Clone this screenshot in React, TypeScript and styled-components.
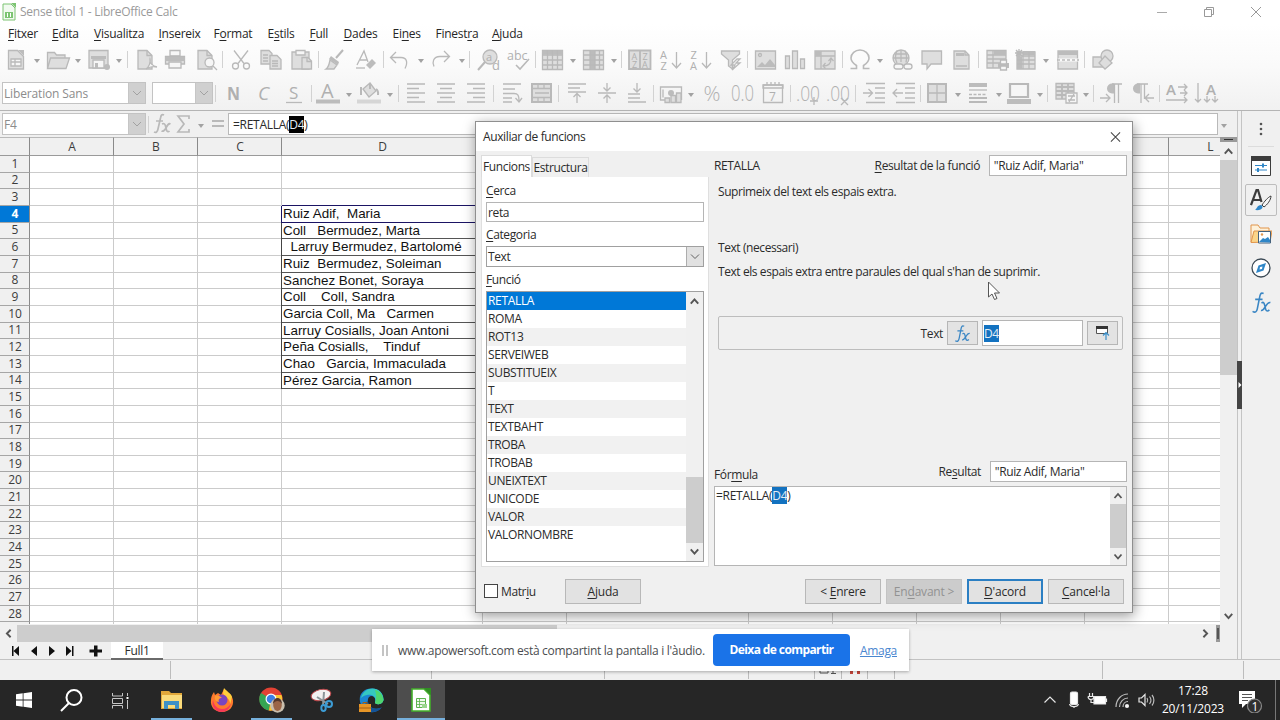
import React from 'react';
import styled, { createGlobalStyle, css } from 'styled-components';

const GlobalStyle = createGlobalStyle`
    * { box-sizing: border-box; }
    body {
        margin: 0;
        overflow: hidden;
        font-family: 'Open Sans', 'Noto Sans', sans-serif;
        font-size: 12px;
        color: #2b2b2b;
    }
    u { text-underline-offset: 2px; text-decoration-thickness: 1px; }
`;

const Screen = styled.div`
    position: relative;
    width: 1280px;
    height: 720px;
    display: flex;
    flex-direction: column;
    overflow: hidden;
    background: #f0f0f0;
`;

/* window header */
const Header = styled.div`
    height: 111px;
    flex: none;
    background: linear-gradient(#ffffff 22%, #fafafa 60%, #f1f1f1);
    border-bottom: 1px solid #b4b4b4;
`;
const TitleBar = styled.div`
    height: 23px;
    display: flex;
    align-items: center;
    padding: 0 17px 0 2px;
    color: #9a9a9a;

    span {
        flex: 1;
        margin-left: 4px;
        letter-spacing: -0.25px;
    }
    svg + svg { margin-left: 33px; }
`;
const MenuBar = styled.div`
    height: 20px;
    display: flex;
    align-items: center;
    padding-left: 8px;
`;
const MenuItem = styled.span<{ $w: number }>`
    width: ${p => p.$w}px;
    white-space: nowrap;
    letter-spacing: -0.25px;
    color: #262626;
`;
const ToolRow = styled.div<{ $h: number; $pad: number }>`
    height: ${p => p.$h}px;
    display: flex;
    align-items: center;
    padding-left: ${p => p.$pad}px;
`;
const Tool = styled.svg<{ $gap: number }>`
    width: 24px;
    height: 24px;
    flex: none;
    margin-left: ${p => p.$gap}px;
    overflow: visible;
    fill: none;
    stroke: #b9b9b9;
    stroke-width: 1.3;

    .f { fill: #dedede; }
    .d { fill: #bcbcbc; stroke: none; }
    .w { fill: #f6f6f6; }
    text {
        fill: #b0b0b0;
        stroke: none;
        font-family: 'Open Sans', sans-serif;
    }
`;
const Caret = styled.i<{ $gap: number }>`
    width: 0;
    height: 0;
    flex: none;
    margin: 3px 1px 0 ${p => p.$gap + 1}px;
    border: 3px solid transparent;
    border-top: 4px solid #a2a2a2;
    border-bottom: 0;
`;
const Divider = styled.i<{ $gap: number }>`
    width: 1px;
    height: 17px;
    flex: none;
    margin-left: ${p => p.$gap}px;
    background: #d2d2d2;
`;
const Combo = styled.div<{ $w: number; $gap?: number; $dark?: boolean; $h?: number }>`
    width: ${p => p.$w}px;
    height: ${p => p.$h || 22}px;
    flex: none;
    margin-left: ${p => p.$gap || 0}px;
    display: flex;
    align-items: center;
    justify-content: space-between;
    padding-left: 1px;
    border: 1px solid ${p => (p.$dark ? '#a0a0a0' : '#c3c3c3')};
    background: #fff;
    color: ${p => (p.$dark ? '#2b2b2b' : '#8c8c8c')};
    letter-spacing: ${p => (p.$dark ? '-0.4px' : '-0.15px')};

    svg {
        width: 17px;
        height: 100%;
        padding: 0 3px;
        background: ${p => (p.$dark ? '#e1e1e1' : '#d0d0d0')};
        border-left: 1px solid ${p => (p.$dark ? '#adadad' : '#c6c6c6')};
        stroke: ${p => (p.$dark ? '#606060' : '#a2a2a2')};
        fill: none;
    }
`;

/* body */
const Body = styled.div`
    height: 549px;
    flex: none;
    display: flex;
    border-bottom: 1px solid #c2c2c2;
`;
const Main = styled.div`
    width: 1237px;
    display: flex;
    flex-direction: column;
`;
const FormulaBar = styled.div`
    height: 26px;
    flex: none;
    display: flex;
    align-items: center;
    padding-left: 2px;
`;
const FormulaInput = styled.div`
    width: 990px;
    height: 22px;
    margin-left: -2px;
    padding: 0 4px;
    display: flex;
    align-items: center;
    background: #fff;
    border: 1px solid #b9b9b9;
    letter-spacing: -0.28px;
`;
const Mark = styled.span<{ $c: string }>`
    background: ${p => p.$c};
    color: #e4edf5;
    line-height: 17px;
`;
const SheetArea = styled.div`
    height: 488px;
    flex: none;
    display: flex;
`;
const Sheet = styled.div`
    width: 1220px;
    height: 487px;
    flex: none;
    overflow: hidden;
    background: #fff;
`;
const widths = [84, 84, 84, 201, 84, 181.5, 84, 84, 84, 84, 84, 84];
const columns = ['A', 'B', 'C', 'D', 'E', 'F', 'G', 'H', 'I', 'J', 'K', 'L'];
const Row = styled.div<{ $head?: boolean }>`
    width: 1253px;
    height: ${p => (p.$head ? '19px' : '16.67px')};
    display: grid;
    grid-template-columns: 30px ${widths.map(w => w + 'px').join(' ')};
`;
const HeadCell = styled.div<{ $active?: boolean; $top?: boolean }>`
    display: flex;
    align-items: center;
    justify-content: center;
    padding-left: 1px;
    background: ${p => (p.$active ? '#0078d7' : '#f0f0f0')};
    color: ${p => (p.$active ? '#fff' : '#3c3c3c')};
    font-weight: ${p => (p.$active ? 700 : 400)};
    line-height: 14px;
    border-right: 1px solid #8a8a8a;
    border-bottom: 1px solid ${p => (p.$top ? '#9a9a9a' : '#a6a6a6')};
    ${p => p.$top && css`border-top: 1px solid #b9b9b9;`}
`;
const Cell = styled.div<{ $boxed?: boolean; $active?: boolean }>`
    position: relative;
    padding-left: 1px;
    border-right: 1px solid #cbcbcb;
    border-bottom: 1px solid #cbcbcb;
    font: 13.4px/15.5px 'Liberation Sans', Arial, sans-serif;
    color: #111;
    white-space: pre;
    ${p => p.$boxed && css`
        border-bottom-color: #555;
        box-shadow: -1px 0 0 #444;
    `}
    ${p => p.$active && css`
        border-bottom-color: #1b1464;
        box-shadow: -1px 0 0 #1b1464, 0 -1px 0 #1b1464;
    `}
`;

/* scroll bars */
const VScroll = styled.div<{ $w?: number }>`
    width: ${p => p.$w || 17}px;
    flex: none;
    display: flex;
    flex-direction: column;
    background: #f0f0f0;
`;
const ArrowBox = styled.svg<{ $h?: number; $w?: number }>`
    width: ${p => p.$w || 16}px;
    height: ${p => p.$h || 17}px;
    flex: none;
    fill: none;
    stroke: #555;
    stroke-width: 1.8;
`;
const Thumb = styled.div<{ $h: number; $top?: number }>`
    height: ${p => p.$h}px;
    margin-top: ${p => p.$top || 0}px;
    background: #cdcdcd;
`;
const Spacer = styled.div<{ $max?: number }>`
    flex: 1;
    max-width: ${p => (p.$max ? p.$max + 'px' : 'none')};
`;
const SplitGrip = styled.div`
    height: 5px;
    background: #999;
    border: solid #999;
    border-width: 2px 4px 1px;

    &::after {
        content: '';
        display: block;
        height: 1px;
        background: #333;
    }
`;
const HScroll = styled.div`
    height: 17px;
    flex: none;
    display: flex;
    width: 1220px;

    .thumb { width: 540px; height: 17px; background: #cdcdcd; }
    .grip { width: 4px; background: #555; border: 1px solid #999; border-width: 3px 1px; }
`;
const Tabs = styled.div`
    height: 18px;
    flex: none;
    display: flex;
    align-items: center;
    padding-left: 11px;

    > svg { width: 93px; height: 18px; margin-right: 7px; }
`;
const SheetTab = styled.div`
    width: 52px;
    height: 18px;
    line-height: 18px;
    text-align: center;
    background: #fff;
    border-bottom: 2px solid #6a6a6a;
    letter-spacing: -0.3px;
`;
const SplitBar = styled.div`
    width: 5px;
    flex: none;
    padding-top: 250px;
    border: solid #c4c4c4;
    border-width: 0 1px;

    svg { display: block; width: 5px; height: 48px; margin-left: -1px; }
`;
const SideBar = styled.div`
    width: 38px;
    padding-top: 11px;
    display: flex;
    flex-direction: column;
    align-items: center;

    hr { width: 26px; border: 0; border-top: 1px solid #dcdcdc; margin: 10px 0 2px; }
`;
const SideButton = styled.div<{ $on?: boolean }>`
    width: 32px;
    height: 32px;
    margin: 1px 0;
    display: flex;
    align-items: center;
    justify-content: center;
    border: 1px solid ${p => (p.$on ? '#bdbdbd' : 'transparent')};
    border-radius: 2px;
`;
const StatusBar = styled.div`
    height: 20px;
    flex: none;
    display: flex;
    padding: 1px 0;
`;
const StatusCell = styled.div<{ $w: number }>`
    width: ${p => p.$w}px;
    border-right: 1px solid #bcbcbc;
    text-align: center;
`;

/* function wizard */
const Dialog = styled.div`
    position: absolute;
    left: 475px;
    top: 121px;
    width: 658px;
    height: 492px;
    display: flex;
    flex-direction: column;
    background: #f0f0f0;
    border: 1px solid #8f8f8f;
    box-shadow: 1px 3px 12px rgba(0, 0, 0, 0.4);
    letter-spacing: -0.38px;
`;
const DialogTitle = styled.div`
    height: 29px;
    flex: none;
    display: flex;
    align-items: center;
    justify-content: space-between;
    padding: 0 11px 0 7px;
    background: #fff;
`;
const DialogBody = styled.div`
    height: 416px;
    flex: none;
    display: flex;
    padding: 4px 5px 0;
`;
const LeftPane = styled.div`
    width: 228px;
    height: 412px;
    display: flex;
    flex-direction: column;
`;
const DialogTabs = styled.div`
    display: flex;
    align-items: flex-end;
    height: 22px;
    flex: none;
`;
const DialogTab = styled.div<{ $on?: boolean }>`
    width: ${p => (p.$on ? 51 : 57)}px;
    height: ${p => (p.$on ? 22 : 20)}px;
    line-height: ${p => (p.$on ? 21 : 20)}px;
    text-align: center;
    white-space: nowrap;
    background: ${p => (p.$on ? '#fff' : '#f0f0f0')};
    border: 1px solid #dcdcdc;
    border-bottom: 0;
`;
const Pane = styled.div`
    height: 390px;
    padding: 0 4px 5px 4px;
    background: #fff;
    border: 1px solid #dfdfdf;
    border-top: 0;
`;
const FieldLabel = styled.div<{ $h: number }>`
    height: ${p => p.$h}px;
    line-height: ${p => p.$h + 2}px;
`;
const Field = styled.div<{ $w: number; $h?: number }>`
    width: ${p => p.$w}px;
    height: ${p => p.$h || 21}px;
    flex: none;
    display: flex;
    align-items: center;
    padding-left: 1px;
    background: #fff;
    border: 1px solid #b5b5b5;
`;
const List = styled.div`
    height: 271px;
    display: flex;
    border: 1px solid #a0a0a0;
    background: #fff;

    > div:first-child { width: 199px; }
`;
const ListItem = styled.div<{ $on?: boolean }>`
    height: 18px;
    line-height: 18px;
    padding-left: 1px;
    letter-spacing: -0.33px;
    background: #fff;
    &:nth-child(odd) { background: #f1f1f1; }
    ${p => p.$on && css`
        color: #fff;
        &:nth-child(odd) { background: #0078d7; }
    `}
`;
const RightPane = styled.div`
    width: 413px;
    margin-left: 5px;
    display: flex;
    flex-direction: column;
`;
const ResultRow = styled.div<{ $top?: number }>`
    height: 21px;
    margin-top: ${p => p.$top || 0}px;
    flex: none;
    display: flex;
    align-items: center;
    justify-content: space-between;

    > div { display: flex; align-items: center; gap: 9px; }
    > .low { padding-top: 5px; }
`;
const Description = styled.div<{ $h: number; $top?: number }>`
    height: ${p => p.$h}px;
    flex: none;
    padding: ${p => p.$top || 0}px 0 0 4px;
    line-height: 16px;
    letter-spacing: -0.42px;
`;
const ArgumentBox = styled.div`
    width: 405px;
    height: 34px;
    flex: none;
    margin-left: 4px;
    padding-right: 4px;
    display: flex;
    align-items: center;
    justify-content: flex-end;
    gap: 4px;
    border: 1px solid #bdbdbd;
    border-radius: 2px;
`;
const IconButton = styled.div`
    width: 31px;
    height: 24px;
    display: flex;
    align-items: center;
    justify-content: center;
    background: #e3e3e3;
    border: 1px solid #b6b6b6;
`;
const FormulaText = styled.div`
    height: 80px;
    margin-top: 4px;
    display: flex;
    justify-content: space-between;
    background: #fff;
    border: 1px solid #b5b5b5;

    > span { padding: 0 1px; line-height: 17px; letter-spacing: -0.28px; }
`;
const DialogFooter = styled.div`
    flex: 1;
    display: flex;
    align-items: center;
    padding: 3px 8px 0 8px;
    gap: 5px;

    .check { width: 14px; height: 14px; border: 1px solid #444; background: #fff; }
    .label { width: 59px; margin-left: -2px; }
`;
const DialogButton = styled.div<{ $primary?: boolean; $off?: boolean }>`
    width: 76px;
    height: 25px;
    line-height: 23px;
    text-align: center;
    letter-spacing: -0.2px;
    background: ${p => (p.$off ? '#cccccc' : '#e2e2e2')};
    color: ${p => (p.$off ? '#929292' : '#2b2b2b')};
    border: 1px solid ${p => (p.$off ? '#c3c3c3' : '#b8b8b8')};
    ${p => p.$primary && css`
        border: 2px solid #2b7fc3;
        line-height: 21px;
    `}
`;

/* screen sharing notice */
const ShareBar = styled.div`
    position: absolute;
    left: 372px;
    top: 629px;
    width: 537px;
    height: 42px;
    display: flex;
    align-items: center;
    padding: 0 12px 0 10px;
    background: #fff;
    box-shadow: 0 1px 3px rgba(0, 0, 0, 0.3);
    color: #4a4d50;

    .handle { width: 6px; height: 11px; border: solid #c4c4c4; border-width: 0 2px; }
    .message { width: 325px; flex: none; padding-left: 10px; white-space: nowrap; letter-spacing: -0.3px; }
    a { margin-left: 10px; color: #4a86cf; text-decoration: underline; letter-spacing: -0.3px; }
`;
const StopButton = styled.div`
    width: 137px;
    height: 32px;
    flex: none;
    line-height: 32px;
    text-align: center;
    border-radius: 4px;
    background: #1a73e8;
    color: #fff;
    font-weight: 700;
    letter-spacing: -0.6px;
`;
const Pointer = styled.svg`
    position: absolute;
    left: 987px;
    top: 281px;
    width: 14px;
    height: 20px;
`;

/* windows task bar */
const TaskBar = styled.div`
    height: 40px;
    flex: none;
    display: flex;
    background: #262626;
    color: #fff;
`;
const TaskItem = styled.div<{ $w?: number; $line?: boolean; $on?: boolean }>`
    width: ${p => p.$w || 50}px;
    height: 40px;
    display: flex;
    align-items: center;
    justify-content: center;
    background: ${p => (p.$on ? '#4d4d4d' : 'none')};

    ${p => p.$line && css`
        background-image: linear-gradient(#76b0dc, #76b0dc);
        background-repeat: no-repeat;
        background-position: bottom;
        background-size: ${p.$on ? '100%' : '41px'} 2px;
    `}
`;
const Tray = styled.div`
    margin-left: auto;
    display: flex;
    align-items: center;

    > svg { width: 24px; height: 24px; fill: none; stroke: #e6e6e6; stroke-width: 1.2; }
    > svg:last-of-type { width: 26px; height: 26px; margin-left: 9px; }
`;
const Clock = styled.div`
    width: 70px;
    text-align: center;
    line-height: 18px;
    letter-spacing: -0.15px;
    white-space: nowrap;
`;
const ShowDesktop = styled.div`
    width: 5px;
    height: 40px;
    margin-left: 12px;
    border-left: 1px solid #777;
`;

const lines = (ys: number[], x1: number, x2: number) => ys.map(y => `M${x1} ${y}H${x2}`).join('');

const icons: Record<string, React.ReactNode> = {
    newDoc: <><path className="f" d="M4.500 2.500h9l6 6v12.500h-15z" /><path className="d" d="M14 2h6v6z" /><path className="w" d="M7 11h10v7H7zM7 14h10M11 11v7" /></>,
    open: <path className="f" d="M1.500 20V4.500h7l2 2.500h8.500v3M1.500 20.500l3-10.500h19l-3.500 10.500z" />,
    save: <><path className="f" d="M2 2.500h19v17.500H2z" /><path className="w" d="M6 12h11v8H6z" /><path className="d" d="M4 8h15v3H4zM8 15h3v5H8z" /><circle className="d" cx="20" cy="19" r="3" /></>,
    pdf: <><path className="f" d="M4 2.500h9l5 5V21H4z" /><path d="M13 2.500v5h5" /><path className="w" d="M12 21c3-2 5-7 4-10-1 4 3 7 7 8-4-1-8 0-11 2z" /></>,
    print: <><path className="w" d="M7 2.500h10V8H7z" /><path className="f" d="M2.500 8.500h19V16h-19z" /><path className="d" d="M2 9h20v4H2z" /><path className="w" d="M6 14h12v6H6z" /></>,
    preview: <><path className="f" d="M3 2.500h9l5 5V21H3z" /><path d="M12 2.500v5h5" /><circle className="w" cx="14.500" cy="14.500" r="4.500" /><path d="M18 18l4 4" /></>,
    cut: <><path d="M5 2.500l10 13M19 2.500l-10 13" /><circle cx="6.500" cy="18" r="3" /><circle cx="17.500" cy="18" r="3" /></>,
    copy: <><path className="f" d="M2 2.500h8l3 3V16H2z" /><path className="f" d="M11 7.500h7l4 4V21H11z" /><path d="M4 7h5M4 10h5M4 13h5M13 13h6M13 15.500h6M13 18h6" /></>,
    paste: <><path className="f" d="M2 4h17v17H2z" /><path className="w" d="M6 2.500h9V7H6z" /><path className="f" d="M12 9.500h6l3.500 3.500v8H12z" /><path d="M17 9.500v4h4" /></>,
    brush: <><path d="M20 2l-7 8" strokeWidth="2" /><path className="d" d="M8 8l8 6-1 3-9-6z" /><path className="f" d="M7 12l7 5-3 4H3c3-2 3-5 4-9z" /></>,
    clear: <><path d="M3 17L10 3l4 11M6 12h7" /><path className="d" d="M12 17l6-6 4 4-6 6z" /><path d="M2 20h9" /></>,
    undo: <path d="M8 4L2.500 9.500 8 15M3 9.500h10c6 0 7 5 4 11" />,
    redo: <path d="M15 3l5.500 5.500L15 14M20 8.500H11c-7 0-8 6-6 10" />,
    find: <><circle className="f" cx="13" cy="9" r="7" /><path d="M8 14l-7 8" strokeWidth="2" /><text x="9" y="13" fontSize="11">a</text><text x="15" y="22" fontSize="13">d</text></>,
    spell: <><text x="1" y="12" fontSize="12.500">abc</text><path d="M10 17l4 4 9-10" strokeWidth="1.600" /></>,
    table: <><path className="f" d="M1.500 2.500h20v19h-20z" /><path className="d" d="M1.500 2.500h20v4h-20z" /><path d={lines([7, 12, 17], 1, 22) + 'M6.500 2v20M11.500 2v20M16.500 2v20'} /></>,
    column: <><path className="f" d="M1.500 2.500h20v19h-20z" /><path className="d" d="M8 2.500h5v19H8z" /><path d={lines([7, 12, 17], 1, 22) + 'M8 2v20M13 2v20M17.500 2v20'} /></>,
    autofilter: <><path className="f" d="M1 2.500h21.500V21H1zM12 2.500V21" strokeWidth="1.800" /><text x="3.500" y="11.500" fontSize="9">A</text><text x="4" y="20" fontSize="9">Z</text><text x="14.500" y="11.500" fontSize="9">Z</text><text x="14" y="20" fontSize="9">A</text></>,
    sortAz: <><text x="1" y="11" fontSize="11">A</text><text x="1.500" y="22" fontSize="11">Z</text><path d="M17.500 4v16M13 15l4.500 5 4.500-5" /></>,
    sortZa: <><text x="1.500" y="11" fontSize="11">Z</text><text x="1" y="22" fontSize="11">A</text><path d="M17.500 4v16M13 15l4.500 5 4.500-5" /></>,
    filter: <><path className="f" d="M2.500 3h18v3l-7 6v9l-4-3v-6l-7-6z" /><path className="w" d="M18 11l-6 6h4l-3 5 8-7h-4l4-4z" /></>,
    image: <><path className="f" d="M1.500 3h20v18h-20z" /><path className="d" d="M3 19l5-5 3 3 5-6 5 6v2z" /><circle cx="6" cy="7" r="1.500" /></>,
    chart: <path className="f" d="M2.500 8h4v12.500h-4zM9.500 3h5v17.500h-5zM17.500 11h4v9.500h-4z" />,
    pivot: <><path className="f" d="M2 3h20v18H2z" /><path d="M8 3v18M2 8h20M10 18c5 0 8-2 8-7M15.500 13l2.500-3 2.500 3M12.500 15L10 18l2.500 2.500" /><path className="d" d="M2 3h6v5H2z" /></>,
    omega: <path d="M2.500 20.500h6v-3C4.500 15 3 12.500 3 10a9 8 0 0 1 18 0c0 2.500-1.500 5-5.500 7.500v3h6" strokeWidth="1.600" />,
    globe: <><circle className="f" cx="11" cy="10" r="8" /><path d="M3 10h16M4.500 6h13M11 2v12M7 2.500C5 7 5 11 7 15M15 2.500c2 4.500 2 8 1 12" /><rect className="w" x="4" y="16" width="9" height="5" rx="2.500" /><rect className="w" x="14" y="16" width="8" height="5" rx="2.500" /></>,
    comment: <path className="f" d="M2 3h19.500v13H11l-4 5v-5H2z" />,
    header: <><path className="f" d="M4 3h11l4 4v14H4z" /><path className="d" d="M6 5h8v3H6z" /><path d="M15 3v4h4M6 18h11" /></>,
    printArea: <><path className="f" d="M2 2.500h19V20H2z" /><path d={lines([7, 11, 15], 2, 21) + 'M8 2v18'} /><path className="d" d="M9 3h12v4H9zM13 15h11v5H13z" /><path className="w" d="M15.500 12h6v4h-6zM15.500 18h6v4h-6z" /></>,
    freeze: <><path className="f" d="M3 4h18v17H3z" /><path className="d" d="M9 3h12v4H9zM3 9h5v12H3z" /><path d={lines([8, 12, 16], 3, 21) + 'M9 4v17M15 4v17'} /><path d="M1 5h8M5 1v8M2 2l6 6M8 2L2 8" /></>,
    split: <><path className="f" d="M2 3h19.500v18H2z" /><path className="d" d="M2 3h19.500v4H2z" /><path d="M2 12h20" stroke="#fafafa" strokeWidth="3" /><path d="M1 12h22" strokeDasharray="3 2" /></>,
    shapes: <><path className="f" d="M2 9h11v10H2z" /><circle className="f" cx="16" cy="8" r="6" /><path className="f" d="M14 8l7 7-7 6-6-6z" /></>,
    bold: <text x="5" y="19" fontSize="18" fontWeight="700" textLength="13" lengthAdjust="spacingAndGlyphs">N</text>,
    italic: <text x="6" y="19" fontSize="19" fontStyle="italic">C</text>,
    underline: <><text x="7" y="17.500" fontSize="17">S</text><path d="M4 21.500h16" /></>,
    fontColor: <><text x="5" y="17" fontSize="20">A</text><path className="d" d="M0 18.500h24v4H0z" /></>,
    fill: <><path className="f" d="M6 8l7-6 6 8-7 6z" /><path d="M4 14V6M13 2v6M19 8c3 2 2 4 2 6" strokeWidth="2" /><path d="M0 20.500h24" stroke="#d6d6d6" strokeWidth="4" /></>,
    left: <path d={'M3 3h18M3 7.500h12M3 12h18M3 16.500h12M3 21h18'} />,
    center: <path d={'M3 3h18M6 7.500h12M3 12h18M6 16.500h12M3 21h18'} />,
    right: <path d={'M3 3h18M9 7.500h12M3 12h18M9 16.500h12M3 21h18'} />,
    wrap: <path d="M3 3h18M3 8h12M3 12.500h11c4 0 5 2 5 7M3 17h9M3 21h9M15.500 17l3.500 4 3-4" />,
    merge: <><path className="f" d="M2 3h19v18H2z" strokeWidth="2" /><path d="M2 7.500h19M2 16.500h19M8 3v5M14 3v5M8 16v5M14 16v5M5 12h14" /></>,
    top: <path d="M3 3h18M3 7h12M3 11h18M12 22v-9M8.500 16l3.500-3.500 3.500 3.500" />,
    middle: <path d="M3 12h18M12 2v8M8.500 6.500L12 10l3.500-3.500M12 22v-7M8.500 17.500L12 14l3.500 3.500" />,
    bottom: <path d="M3 13h12M3 17h12M3 21h18M12 2v9M8.500 7.500L12 11l3.500-3.500" />,
    currency: <><path d="M6 19H1.500V6h21v13M4 8.500v8" /><circle className="d" cx="12" cy="12" r="3" /><path className="f" d="M6 17h4.500v4.500H6zM12 14.500h4.500v7H12zM17.500 12h4.500v9.500h-4.500z" /></>,
    percent: <text x="3.500" y="19.500" fontSize="20" fontWeight="300" textLength="17" lengthAdjust="spacingAndGlyphs">%</text>,
    number: <text x="1" y="20" fontSize="22" fontWeight="300" textLength="23" lengthAdjust="spacingAndGlyphs">0.0</text>,
    date: <><path d="M2.500 4h19v17.500h-19z" /><path d="M2 4h20v3H2zM6 1v3M10 1v3M14 1v3M18 1v3" /><text x="8" y="19.500" fontSize="12">7</text></>,
    addDec: <><text x="0" y="20" fontSize="21" fontWeight="300" textLength="24" lengthAdjust="spacingAndGlyphs">.00</text><path d="M18 16v8M14 20h8" /></>,
    delDec: <><text x="0" y="20" fontSize="21" fontWeight="300" textLength="24" lengthAdjust="spacingAndGlyphs">.00</text><path d="M15 17l7 7M22 17l-7 7" /></>,
    indent: <path d="M4 2.500h19M13 7h10M13 12h10M13 17h10M4 21.500h19M1 12h9M6.500 8l4 4-4 4" />,
    outdent: <path d="M4 2.500h19M13 7h10M13 12h10M13 17h10M4 21.500h19M11 12H1M5 8l-4 4 4 4" />,
    borders: <><path className="f" d="M3 3h18v18H3z" strokeWidth="2" /><path d="M12 3v18M3 12h18" /></>,
    lineStyle: <><path className="d" d="M3 2h18v4H3z" /><path d="M3 9h18" /><path d="M3 13.500h18" strokeDasharray="3 1.500" /><path d="M3 17h18M3 21h18" strokeWidth="2" /></>,
    lineColor: <><path className="w" d="M3 3h18v13H3z" strokeWidth="2.200" /><path className="d" d="M0 18h24v5H0z" /></>,
    conditional: <><path className="f" d="M2 2.500h18V18H2z" /><path d={lines([6, 10, 14], 2, 20) + 'M8 2v16M14 2v16'} strokeWidth="1.800" /><path className="w" d="M12 12h11v10H12z" /><path d="M14 15h7M14 19h7M20 13l-5 8" /></>,
    ltr: <><path className="d" d="M15 2.500H13a5 5 0 0 0 0 10h2z" /><path d="M13 3h10M15.500 3v19M19.500 3v19M1 17h10M7 13l4 4-4 4" /></>,
    rtl: <><path className="d" d="M9 2.500H7a5 5 0 0 0 0 10h2z" /><path d="M6 3h11M10 3v19M13.500 3v15M23 17H14M18 13l-4 4 4 4" /></>,
    textLtr: <><text x="0" y="14" fontSize="15" fontWeight="600">A</text><path d="M12 6h9M14 12h7M0 19h21M18 3l3 3-3 3M18 9l3 3-3 3M18 16l3 3-3 3" /></>,
    textTtb: <><text x="11" y="14" fontSize="15" fontWeight="600">A</text><path d="M3 2v19M0 18l3 3 3-3M12 15v6M9 18l3 3 3-3M20 15v6M17 18l3 3 3-3" /></>,
};

type ToolSpec = [string, number];

const standardTools: ToolSpec[] = [
    ['newDoc', 0], ['v', 5], ['open', 5], ['v', 4], ['save', 5], ['v', 4], ['|', 4],
    ['pdf', 6], ['print', 5], ['preview', 8], ['|', 3], ['cut', 6], ['copy', 6], ['paste', 7], ['|', 4],
    ['brush', 4], ['clear', 7], ['|', 5], ['undo', 4], ['v', 5], ['redo', 4], ['v', 5], ['|', 3],
    ['find', 7], ['spell', 5], ['|', 5], ['table', 5], ['v', 4], ['column', 5], ['v', 4], ['|', 3],
    ['autofilter', 6], ['sortAz', 7], ['sortZa', 6], ['filter', 6], ['|', 4],
    ['image', 6], ['chart', 5], ['pivot', 6], ['|', 5], ['omega', 5], ['v', 4], ['globe', 6], ['comment', 6], ['header', 6], ['|', 4],
    ['printArea', 6], ['freeze', 5], ['v', 4], ['split', 6], ['|', 4], ['shapes', 6],
];

const formatTools: ToolSpec[] = [
    ['|', 2], ['bold', 6], ['italic', 6], ['underline', 6], ['|', 5],
    ['fontColor', 4], ['v', 5], ['fill', 4], ['v', 5], ['|', 4],
    ['left', 5], ['center', 6], ['right', 6], ['|', 5], ['wrap', 6], ['merge', 6], ['|', 4],
    ['top', 6], ['middle', 6], ['bottom', 6], ['|', 4],
    ['currency', 5], ['v', 4], ['percent', 5], ['number', 6], ['date', 7], ['|', 5],
    ['addDec', 5], ['delDec', 6], ['|', 5], ['indent', 6], ['outdent', 6], ['|', 4],
    ['borders', 4], ['v', 5], ['lineStyle', 4], ['v', 5], ['lineColor', 4], ['v', 5], ['|', 3],
    ['conditional', 6], ['v', 4], ['|', 3], ['ltr', 5], ['rtl', 8], ['|', 4], ['textLtr', 6], ['textTtb', 5],
];

const names: Record<number, string> = {
    4: 'Ruiz Adif,  Maria',
    5: 'Coll   Bermudez, Marta',
    6: '  Larruy Bermudez, Bartolomé',
    7: 'Ruiz  Bermudez, Soleiman',
    8: 'Sanchez Bonet, Soraya',
    9: 'Coll    Coll, Sandra',
    10: 'Garcia Coll, Ma   Carmen',
    11: 'Larruy Cosialls, Joan Antoni',
    12: 'Peña Cosialls,    Tinduf',
    13: 'Chao   Garcia, Immaculada',
    14: 'Pérez Garcia, Ramon',
};

const functionNames = [
    'RETALLA', 'ROMA', 'ROT13', 'SERVEIWEB', 'SUBSTITUEIX', 'T', 'TEXT',
    'TEXTBAHT', 'TROBA', 'TROBAB', 'UNEIXTEXT', 'UNICODE', 'VALOR', 'VALORNOMBRE',
];

// [before, accelerator, after, width]
const menus: [string, string, string, number][] = [
    ['', 'F', 'itxer', 44], ['', 'E', 'dita', 42], ['', 'V', 'isualitza', 64.500], ['', 'I', 'nsereix', 55], ['F', 'o', 'rmat', 54],
    ['E', 's', 'tils', 42], ['', 'F', 'ull', 34], ['', 'D', 'ades', 49], ['Ei', 'n', 'es', 43], ['Finest', 'r', 'a', 56.500], ['', 'A', 'juda', 40],
];

const ToolList = ({ items }: { items: ToolSpec[] }) => (
    <>
        {items.map(([name, gap], i) => {
            if (name === '|') return <Divider key={i} $gap={gap} />;
            if (name === 'v') return <Caret key={i} $gap={gap} />;
            return <Tool key={i} $gap={gap} viewBox="0 0 24 24">{icons[name]}</Tool>;
        })}
    </>
);

const Chevron = () => <svg viewBox="0 0 10 10"><path d="M1 3l4 4 4-4" /></svg>;
const Arrow = ({ d, w, h }: { d: string; w?: number; h?: number }) => (
    <ArrowBox $w={w} $h={h} viewBox="0 0 16 16"><path d={d} /></ArrowBox>
);
const UP = 'M4.500 10.500L8 6.500l3.500 4';
const DOWN = 'M4.500 6l3.500 4L11.500 6';

const Fx = ({ color, size }: { color: string; size: number }) => (
    <svg width={size} height={size} viewBox="0 0 20 20" fill="none" stroke={color} strokeWidth="1.500">
        <path d="M12 1.500C9 0 8.500 3 8 6L6 16c-.6 3-2 4-4.500 2.500M4 7h7" />
        <path d="M10 10.500c2-1.500 2.500 0 3 2l1 4c.5 2 2 2 3.500.500M18.500 10c-2-.5-3 1-4.500 3.500s-2.500 4.500-4.500 4" />
    </svg>
);

const CalcIcon = () => (
    <svg width="14" height="18" viewBox="0 0 14 18">
        <path d="M1 1h8l4 4v12H1z" fill="#f1faf0" stroke="#7cc472" />
        <path d="M9 0h5v5z" fill="#7cc472" />
        <path d="M3 9h8v6H3z" fill="#7cc472" />
        <path d="M5.500 10v4M8.500 10v4" stroke="#fff" />
    </svg>
);

const SideIcons = () => (
    <SideBar>
        <svg width="4" height="14" viewBox="0 0 4 14" fill="#555"><circle cx="2" cy="2" r="1.300" /><circle cx="2" cy="7" r="1.300" /><circle cx="2" cy="12" r="1.300" /></svg>
        <hr />
        <SideButton>
            <svg width="20" height="20" viewBox="0 0 20 20"><path d="M.5 1.500h19v18H.5z" fill="#fff" stroke="#3c3c3c" /><path d="M0 0h20v5H0z" fill="#3c3c3c" /><path d="M4 9.500h12M4 14h12" stroke="#2f86c7" /><path d="M11 7.500h2v4h-2zM6 12h2v4H6z" fill="#2f86c7" /></svg>
        </SideButton>
        <SideButton $on>
            <svg width="22" height="24" viewBox="0 0 22 24" fill="none"><path d="M1 17L6.500 2h1.500l3.500 12M3 12h8" stroke="#3c3c3c" strokeWidth="2.200" /><path d="M21 8c-3 1-7 6-9 9l2 2c3-2 7-7 7-11z" fill="#f5f5f5" stroke="#3c3c3c" /><path d="M5 22c2-1 2-5 6-5 3 1 2 6-6 5z" fill="#2f86c7" /></svg>
        </SideButton>
        <SideButton>
            <svg width="22" height="20" viewBox="0 0 22 20"><path d="M1 18V1h7l2 3h9v4" fill="#fdf1da" stroke="#e2954b" /><path d="M1 18.500L4 7h18l-2 11z" fill="#fbd58a" stroke="#e2954b" /><path d="M8.500 7.500h12v11.500h-12z" fill="#fff" stroke="#44617c" /><path d="M9 18l4-4 2 1 3-2 2 3v2.500z" fill="#2f86c7" /><circle cx="12" cy="10.500" r="1.200" fill="#e2954b" /></svg>
        </SideButton>
        <SideButton>
            <svg width="20" height="20" viewBox="0 0 20 20"><circle cx="10" cy="10" r="9" fill="#fff" stroke="#3c4a55" strokeWidth="1.300" /><path d="M15 5l-2.500 7.500L5 15l2.500-7.500z" fill="#2f86c7" /><path d="M11.500 8.500l-.5 2.500-2.500.5.500-2.500z" fill="#fff" /></svg>
        </SideButton>
        <SideButton><Fx color="#3a86c4" size={21} /></SideButton>
    </SideBar>
);

const FunctionWizard = () => (
    <Dialog>
        <DialogTitle>
            Auxiliar de funcions
            <svg width="11" height="12" viewBox="0 0 12 12" stroke="#444" strokeWidth="1.100"><path d="M1 1l10 10M11 1L1 11" /></svg>
        </DialogTitle>
        <DialogBody>
            <LeftPane>
                <DialogTabs>
                    <DialogTab $on>Funcions</DialogTab>
                    <DialogTab>Estructura</DialogTab>
                </DialogTabs>
                <Pane>
                    <FieldLabel $h={25}><u>C</u>erca</FieldLabel>
                    <Field $w={218} $h={20}>reta</Field>
                    <FieldLabel $h={24}><u>C</u>ategoria</FieldLabel>
                    <Combo $w={218} $h={21} $dark>Text<Chevron /></Combo>
                    <FieldLabel $h={24}><u>F</u>unció</FieldLabel>
                    <List>
                        <div>
                            {functionNames.map((name, i) => <ListItem key={name} $on={i === 0}>{name}</ListItem>)}
                        </div>
                        <VScroll $w={17}>
                            <Arrow d={UP} w={17} h={18} />
                            <Thumb $h={66} $top={167} />
                            <Arrow d={DOWN} w={17} h={17} />
                        </VScroll>
                    </List>
                </Pane>
            </LeftPane>
            <RightPane>
                <ResultRow>
                    RETALLA
                    <div><span><u>R</u>esultat de la funció</span><Field $w={138}>&nbsp;"Ruiz Adif, Maria"</Field></div>
                </ResultRow>
                <Description $h={64} $top={8}>Suprimeix del text els espais extra.</Description>
                <Description $h={24}>Text (necessari)</Description>
                <Description $h={52}>Text els espais extra entre paraules del qual s'han de suprimir.</Description>
                <ArgumentBox>
                    Text
                    <IconButton><Fx color="#3a86c4" size={17} /></IconButton>
                    <Field $w={101} $h={26}><Mark $c="#1372c0">D4</Mark></Field>
                    <IconButton>
                        <svg width="14" height="16" viewBox="0 0 14 16" fill="none"><path d="M.500 2.500h11v6H.500z" fill="#fff" stroke="#555" /><path d="M0 1h12v3H0z" fill="#333" /><path d="M10 15V8M7 10.500l3-3 3 3" stroke="#3a8fc9" strokeWidth="1.200" /></svg>
                    </IconButton>
                </ArgumentBox>
                <ResultRow $top={111}>
                    <span className="low">Fór<u>m</u>ula</span>
                    <div><span>Re<u>s</u>ultat</span><Field $w={137}>&nbsp;"Ruiz Adif, Maria"</Field></div>
                </ResultRow>
                <FormulaText>
                    <span>=RETALLA(<Mark $c="#1372c0">D4</Mark>)</span>
                    <VScroll $w={16}>
                        <Arrow d={UP} h={17} />
                        <Thumb $h={44} />
                        <Arrow d={DOWN} h={17} />
                    </VScroll>
                </FormulaText>
            </RightPane>
        </DialogBody>
        <DialogFooter>
            <div className="check" />
            <span className="label">Matr<u>i</u>u</span>
            <DialogButton><u>A</u>juda</DialogButton>
            <Spacer />
            <DialogButton>&lt; <u>E</u>nrere</DialogButton>
            <DialogButton $off>En<u>d</u>avant &gt;</DialogButton>
            <DialogButton $primary><u>D</u>'acord</DialogButton>
            <DialogButton><u>C</u>ancel·la</DialogButton>
        </DialogFooter>
    </Dialog>
);

const WindowsBar = () => (
    <TaskBar>
        <TaskItem $w={48}>
            <svg width="16" height="16" viewBox="0 0 16 16" fill="#fff"><path d="M0 2.300l6.700-1v6.300H0zM7.500 1.200L16 0v7.600H7.500zM0 8.400h6.700v6.300L0 13.700zM7.500 8.400H16V16l-8.500-1.200z" /></svg>
        </TaskItem>
        <TaskItem $w={48}>
            <svg width="24" height="24" viewBox="0 0 24 24" fill="none" stroke="#fff" strokeWidth="2"><circle cx="14" cy="9.500" r="7.500" /><path d="M9 15l-8 8" /></svg>
        </TaskItem>
        <TaskItem $w={49}>
            <svg width="17" height="17" viewBox="0 0 17 17" fill="none" stroke="#c6c6c6"><path d="M.5 1v3h10V1M.5 6.500h10v5H.5zM.5 16.500v-3h10v3M15.500 1v3M15.500 8v9" /><path d="M15.500 5v2" stroke="#fff" strokeWidth="2" /></svg>
        </TaskItem>
        <TaskItem $w={53} $line>
            <svg width="22" height="18" viewBox="0 0 22 18"><path d="M0 0h8l2 2h11v16H0z" fill="#e2a83b" /><path d="M1 4h20v13H1z" fill="#fbdc7c" /><path d="M3 18v-8h15v8h-4v-4H7v4z" fill="#3f91c7" /></svg>
        </TaskItem>
        <TaskItem $w={47}>
            <svg width="24" height="24" viewBox="0 0 24 24">
                <path d="M14 1c1 3 8 4 9 11s-4 12-11 12S0 19 1 12c0-3 1-5 3-8l1 3 3-2 3 2z" fill="#ff7a2d" />
                <path d="M14 0c2 3 7 5 8 9l-2 8c1-7-6-8-7-12z" fill="#ffce3c" />
                <path d="M3 12c1 6 5 9 9 9s7-2 9-6c-1 6-5 9-9 9-7 0-11-6-9-12z" fill="#f63a58" />
                <circle cx="12" cy="12" r="5.500" fill="#7a45bf" />
                <path d="M5 8c3-1 5 0 7 2-3 0-4 2-3 4-3 0-5-3-4-6z" fill="#ff9a35" />
            </svg>
        </TaskItem>
        <TaskItem $w={53} $line>
            <svg width="26" height="26" viewBox="0 0 26 26">
                <circle cx="12" cy="12" r="11.500" fill="#e34234" />
                <path d="M12 12L2 6a11.500 11.500 0 0 0 8 17.500z" fill="#35a553" />
                <path d="M12 12l-2 11.500A11.500 11.500 0 0 0 22.500 8H12z" fill="#fbc530" />
                <circle cx="12" cy="12" r="5.500" fill="#fff" /><circle cx="12" cy="12" r="4.300" fill="#3c7fe6" />
                <circle cx="18.500" cy="18.500" r="7.200" fill="#c9bfae" /><ellipse cx="18.500" cy="18" rx="4.300" ry="6" fill="#9b6546" /><path d="M14 17c0-8 9-8 9 0-2-4-7-4-9 0z" fill="#55382c" />
            </svg>
        </TaskItem>
        <TaskItem $w={48}>
            <svg width="24" height="24" viewBox="0 0 24 24" fill="none"><ellipse cx="11" cy="7" rx="10" ry="5.500" transform="rotate(-12 11 7)" fill="#f4f1f1" stroke="#ba474a" /><path d="M7 9l11 7M14 4l-1 14" stroke="#8d9599" strokeWidth="2" /><circle cx="19" cy="16" r="3" stroke="#3d9cd4" strokeWidth="2" /><ellipse cx="13.500" cy="20" rx="2.200" ry="3" stroke="#3d9cd4" strokeWidth="2" /></svg>
        </TaskItem>
        <TaskItem $w={51}>
            <svg width="25" height="25" viewBox="0 0 25 25">
                <path d="M2 17C-2 8 4 0 13 .5 20 .5 25 6 24.500 12c-1 5-8 5-8.500 2.500 1-3 0-6-3-6.500-4 0-5 4-3.500 8 1.500 4 6 6 12.500 4-5 6-16 6-19.500-3z" fill="#1b86d2" />
                <path d="M2 10C5-3 24-3 24.500 12c-1 5-8 5-8.500 2.500C18 9 13 6 8 7c-3 .5-5 2-6 3z" fill="#35c8c0" />
                <path d="M16 2c5 1 8 5 8.500 10-1 5-8 5-8.500 2.500C18 10 17 5 16 2z" fill="#4fd66f" />
                <path d="M9 13c0 7 8 10 14 6-3 5-9 6-13 4S5 14 9 13z" fill="#155397" />
                <path d="M0 16h12v8H0z" fill="#e79627" /><path d="M4 16v-1.500h4V16M0 20h12" stroke="#a75f12" fill="none" />
            </svg>
        </TaskItem>
        <TaskItem $w={48} $line $on>
            <svg width="20" height="24" viewBox="0 0 20 24"><path d="M1 1h12l6 6v16H1z" fill="#fff" stroke="#43b02a" strokeWidth="1.600" /><path d="M13 0h7v7z" fill="#2f8f22" /><path d="M5.500 10.500h9v9h-9z" fill="#eef8ec" stroke="#5bb34d" /><path d="M5.500 13.500h9M5.500 16.500h9M8.500 10.500v9" stroke="#5bb34d" strokeWidth=".8" fill="none" /><path d="M11 16h5v4h-5z" fill="#9bd58f" /></svg>
        </TaskItem>
        <Tray>
            <svg viewBox="0 0 24 24"><path d="M6.500 14.500l5.500-5.500 5.500 5.500" /></svg>
            <svg viewBox="0 0 24 24"><rect x="8.500" y="4" width="7" height="12.500" rx="1.500" fill="#fff" /><path d="M7.500 16c1 3.500 8 3.500 9 0M12 18v2" /></svg>
            <svg viewBox="0 0 24 24"><path d="M8 8.500h11.500v7.500H8z" fill="#fff" /><path d="M20.500 10.500v3.500M3.500 5v3.500M6.500 5v3.500M2 8.500h6c0 4-6 4-6 0M5 12v2.500h3" /></svg>
            <svg viewBox="0 0 24 24"><path d="M6 19C6 11 12 6 18 6M9.500 19c0-5 4-9 8.500-9M13 19c0-3 2-5.500 5-5.500" stroke="#bbb" /><circle cx="17" cy="18" r="1.500" fill="#fff" /></svg>
            <svg viewBox="0 0 24 24"><path d="M5 10h2.500l3.500-3.500v11L7.500 14H5z" /><path d="M13 10c1 1.500 1 3 0 4.500M15.500 8.500c2 2.500 2 5 0 7.500M18 7c2.500 3 2.500 7.500 0 10.500" stroke="#bbb" /></svg>
            <Clock>17:28<br />20/11/2023</Clock>
            <svg viewBox="0 0 26 26">
                <path d="M2 4h16v13H9l-4 4v-4H2z" fill="#fff" stroke="none" /><path d="M5 7.500h10M5 10.500h10M5 13.500h6" stroke="#555" />
                <circle cx="17.500" cy="19" r="7" fill="#303030" stroke="#888" />
                <text x="14.500" y="23.500" fontSize="12" fill="#fff" stroke="none">1</text>
            </svg>
            <ShowDesktop />
        </Tray>
    </TaskBar>
);

const App = () => {
    return (
        <Screen>
            <GlobalStyle />
            <Header>
                <TitleBar>
                    <CalcIcon />
                    <span>Sense títol 1 - LibreOffice Calc</span>
                    <svg width="14" height="12" viewBox="0 0 14 12" stroke="#aaa"><path d="M2 6.500h10" /></svg>
                    <svg width="14" height="12" viewBox="0 0 14 12" stroke="#999" fill="none"><path d="M2.500 3.500h7v7h-7zM4.500 3V1.500h7v7H10" /></svg>
                    <svg width="14" height="12" viewBox="0 0 14 12" stroke="#999"><path d="M2 1l10 10M12 1L2 11" /></svg>
                </TitleBar>
                <MenuBar>
                    {menus.map(([a, k, b, w]) => <MenuItem key={a + k + b} $w={w}>{a}<u>{k}</u>{b}</MenuItem>)}
                </MenuBar>
                <ToolRow $h={33} $pad={4}>
                    <ToolList items={standardTools} />
                </ToolRow>
                <ToolRow $h={34} $pad={2}>
                    <Combo $w={144}>Liberation Sans<Chevron /></Combo>
                    <Combo $w={61} $gap={6}><span /><Chevron /></Combo>
                    <ToolList items={formatTools} />
                </ToolRow>
            </Header>
            <Body>
                <Main>
                    <FormulaBar>
                        <Combo $w={144}>F4<Chevron /></Combo>
                        <Divider $gap={2} />
                        <Tool $gap={2} viewBox="0 0 24 24"><path d="M13 3c-2-1-3 0-3.500 3L7 17c-.5 3-2 4-4 3M5 9h7M11 12c2-1 3 0 3.500 2l1 4c.5 2 2 2 3 1M19.500 12c-2-1-3 1-4 3s-3 5-5 4" strokeWidth="1.700" /></Tool>
                        <Tool $gap={-3} viewBox="0 0 24 24"><path d="M17 7V4H6l6 8-6 8h11v-3" strokeWidth="1.700" /></Tool>
                        <Caret $gap={1} />
                        <Tool $gap={1} viewBox="0 0 24 24"><path d="M6 9h12M6 14h12" strokeWidth="2" /></Tool>
                        <FormulaInput>=RETALLA(<Mark $c="#000">D4</Mark>)</FormulaInput>
                        <Caret $gap={2} />
                    </FormulaBar>
                    <SheetArea>
                        <Sheet>
                            <Row $head>
                                <HeadCell $top />
                                {columns.map(c => <HeadCell key={c} $top>{c}</HeadCell>)}
                            </Row>
                            {Array.from({ length: 29 }, (_, i) => i + 1).map(n => (
                                <Row key={n}>
                                    <HeadCell $active={n === 4}>{n}</HeadCell>
                                    {columns.map(c => (
                                        <Cell key={c} $boxed={c === 'D' && n > 3 && n < 15} $active={c === 'D' && n === 4}>
                                            {c === 'D' ? names[n] : null}
                                        </Cell>
                                    ))}
                                </Row>
                            ))}
                        </Sheet>
                        <VScroll>
                            <SplitGrip />
                            <Arrow d={UP} w={17} h={18} />
                            <Thumb $h={215} />
                            <Spacer />
                            <Arrow d={DOWN} w={17} h={18} />
                        </VScroll>
                    </SheetArea>
                    <HScroll>
                        <Arrow d="M10 4.500L6.500 8l3.500 3.500" w={17} />
                        <div className="thumb" />
                        <Spacer />
                        <Arrow d="M6 4.500L9.500 8 6 11.500" w={17} />
                        <Spacer $max={2} />
                        <div className="grip" />
                    </HScroll>
                    <Tabs>
                        <svg viewBox="0 0 93 18" fill="#111"><path d="M1 4h1.500v10H1zM8 4v10L2.500 9zM26 4v10l-6-5zM38 4v10l6-5zM55 4v10l5.500-5zM61 4h1.500v10H61zM83 3.500h3.500v11H83zM78.500 7.500h12.500v3H78.500z" /></svg>
                        <SheetTab>Full1</SheetTab>
                    </Tabs>
                </Main>
                <SplitBar>
                    <svg viewBox="0 0 5 48"><path d="M0 0h5v48H0z" fill="#444" /><path d="M1.500 21l3 3-3 3z" fill="#fff" /></svg>
                </SplitBar>
                <SideIcons />
            </Body>
            <StatusBar>
                {[171, 261, 173, 144, 66, 27, 26, 27, 208, 141].map((w, i) => (
                    <StatusCell key={i} $w={w}>
                        {i === 5 && <svg width="18" height="14" viewBox="0 0 18 14" fill="none" stroke="#555"><path d="M1 4v8h8V4M14 4v8M12 12.500h5" /></svg>}
                        {i === 6 && <svg width="12" height="14" viewBox="0 0 12 14"><path d="M1 3h10v10H1z" fill="#c9463c" /><path d="M4 10h4v3H4z" fill="#fff" /></svg>}
                    </StatusCell>
                ))}
            </StatusBar>
            <WindowsBar />
            <FunctionWizard />
            <Pointer viewBox="0 0 14 20"><path d="M1.500 1v15l3.500-3 2.500 5.500 2.500-1L7.500 12H12.500z" fill="#fff" stroke="#555" /></Pointer>
            <ShareBar>
                <div className="handle" />
                <div className="message">www.apowersoft.com està compartint la pantalla i l'àudio.</div>
                <StopButton>Deixa de compartir</StopButton>
                <a>Amaga</a>
            </ShareBar>
        </Screen>
    );
};

export default App;
